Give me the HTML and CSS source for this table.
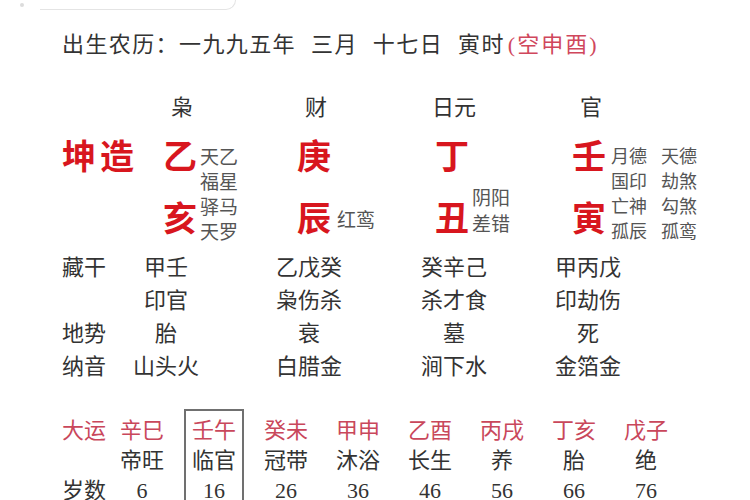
FILE: index.html
```html
<!DOCTYPE html>
<html lang="zh">
<head>
<meta charset="utf-8">
<title>八字排盘</title>
<link rel="stylesheet" href="styles.css">
</head>
<body>
<div class="topbar"><span class="dot"></span><span class="field"></span></div>

<div class="birth">
  <span>出生农历：一九九五年</span>
  <span>三月</span>
  <span>十七日</span>
  <span>寅时<em class="void">(空申酉)</em></span>
</div>

<div class="pillars gods">
  <div></div>
  <div class="god"><span>枭</span></div>
  <div class="god"><span>财</span></div>
  <div class="god"><span>日元</span></div>
  <div class="god"><span>官</span></div>
</div>

<div class="pillars chart">
  <div class="gender">坤造</div>
  <div class="pillar">
    <b class="stem">乙</b>
    <b class="branch">亥</b>
    <div class="stars full"><p>天乙</p><p>福星</p><p>驿马</p><p>天罗</p></div>
  </div>
  <div class="pillar">
    <b class="stem">庚</b>
    <b class="branch">辰</b>
    <div class="stars single"><p>红鸾</p></div>
  </div>
  <div class="pillar">
    <b class="stem">丁</b>
    <b class="branch">丑</b>
    <div class="stars pair"><p>阴阳</p><p>差错</p></div>
  </div>
  <div class="pillar">
    <b class="stem">壬</b>
    <b class="branch">寅</b>
    <div class="stars full double">
      <p><span>月德</span><span>天德</span></p>
      <p><span>国印</span><span>劫煞</span></p>
      <p><span>亡神</span><span>勾煞</span></p>
      <p><span>孤辰</span><span>孤鸾</span></p>
    </div>
  </div>
</div>

<div class="info">
  <div class="label">藏干</div><div>甲壬</div><div>乙戊癸</div><div>癸辛己</div><div>甲丙戊</div>
  <div class="label"></div><div>印官</div><div>枭伤杀</div><div>杀才食</div><div>印劫伤</div>
  <div class="label">地势</div><div>胎</div><div>衰</div><div>墓</div><div>死</div>
  <div class="label">纳音</div><div>山头火</div><div>白腊金</div><div>涧下水</div><div>金箔金</div>
</div>

<div class="luck">
  <div class="col head"><p class="red">大运</p><p></p><p>岁数</p></div>
  <div class="col"><p class="red">辛巳</p><p>帝旺</p><p>6</p></div>
  <div class="col current"><p class="red">壬午</p><p>临官</p><p>16</p></div>
  <div class="col"><p class="red">癸未</p><p>冠带</p><p>26</p></div>
  <div class="col"><p class="red">甲申</p><p>沐浴</p><p>36</p></div>
  <div class="col"><p class="red">乙酉</p><p>长生</p><p>46</p></div>
  <div class="col"><p class="red">丙戌</p><p>养</p><p>56</p></div>
  <div class="col"><p class="red">丁亥</p><p>胎</p><p>66</p></div>
  <div class="col"><p class="red">戊子</p><p>绝</p><p>76</p></div>
</div>
</body>
</html>
```

FILE: styles.css
```css
html, body {
  margin: 0;
  padding: 0;
  background: #ffffff;
}
body {
  width: 750px;
  height: 500px;
  overflow: hidden;
  font-family: "Liberation Serif", "Noto Sans CJK SC", serif;
  color: #333333;
  font-size: 22px;
}
p { margin: 0; }
b { font-weight: 700; }

/* faint search field remnant at the very top */
.topbar {
  display: flex;
  align-items: flex-end;
  height: 10px;
  padding-left: 20px;
}
.dot {
  width: 4px;
  height: 4px;
  border-radius: 50%;
  background: #dcdcdc;
  margin-bottom: 3px;
  margin-right: 16px;
}
.field {
  width: 196px;
  height: 10px;
  border: 1px solid #e4e4e4;
  border-top: none;
  border-left: none;
  border-radius: 0 0 10px 0;
  box-sizing: border-box;
}

.birth {
  display: flex;
  gap: 15px;
  margin-top: 20px;
  padding-left: 62px;
  line-height: 30px;
  font-size: 22px;
  letter-spacing: 1.4px;
}
.void {
  font-style: normal;
  color: #d0475c;
  margin-left: 3px;
  letter-spacing: 2px;
}

.pillars {
  display: grid;
  grid-template-columns: 101px 134px 138px 137px 1fr;
  padding-left: 62px;
}
.gods {
  margin-top: 33px;
  line-height: 30px;
  font-size: 22px;
}
.god span {
  display: flex;
  justify-content: center;
  width: 38px;
  white-space: nowrap;
}

.chart {
  margin-top: 22px;
  height: 100px;
}
.gender {
  font-size: 34px;
  font-weight: 700;
  line-height: 25px;
  color: #d8161e;
  letter-spacing: 4px;
  white-space: nowrap;
}
.pillar {
  display: grid;
  grid-template-columns: 37px auto;
  grid-template-rows: repeat(4, 25px);
}
.stem, .branch {
  grid-column: 1;
  font-size: 34px;
  color: #d8161e;
  line-height: 25px;
}
.stem { grid-row: 1; }
.branch {
  grid-row: 3 / 5;
  align-self: center;
  line-height: 34px;
}
.stars {
  grid-column: 2;
  font-size: 19px;
  color: #555555;
  line-height: 25px;
  white-space: nowrap;
}
.stars.full { grid-row: 1 / 5; }
.stars.single {
  grid-row: 3 / 5;
  align-self: center;
  font-size: 19px;
  padding-left: 3px;
}
.stars.pair {
  grid-row: 3 / 5;
  align-self: end;
  line-height: 26px;
  margin-bottom: 7px;
}
.stars.double { font-size: 18px; padding-left: 2px; }
.stars.double span + span { margin-left: 14px; }

.info {
  display: grid;
  grid-template-columns: 34px 140px 146px 144px 124px;
  padding-left: 62px;
  margin-top: 6px;
  line-height: 33px;
  font-size: 22px;
  text-align: center;
}
.info .label {
  text-align: left;
  white-space: nowrap;
}

.luck {
  display: flex;
  align-items: flex-start;
  padding-left: 62px;
  margin-top: 26px;
  font-size: 22px;
  line-height: 30px;
}
.col {
  width: 72px;
  text-align: center;
  padding-top: 7px;
}
.col.head {
  width: 44px;
  text-align: left;
}
.col p { height: 30px; white-space: nowrap; }
.col .red { color: #c9475b; }
.col.current {
  width: 60px;
  margin: 0 6px;
  box-sizing: border-box;
  border: 2px solid #707070;
  border-bottom: none;
  padding-top: 5px;
  padding-bottom: 30px;
}
```
